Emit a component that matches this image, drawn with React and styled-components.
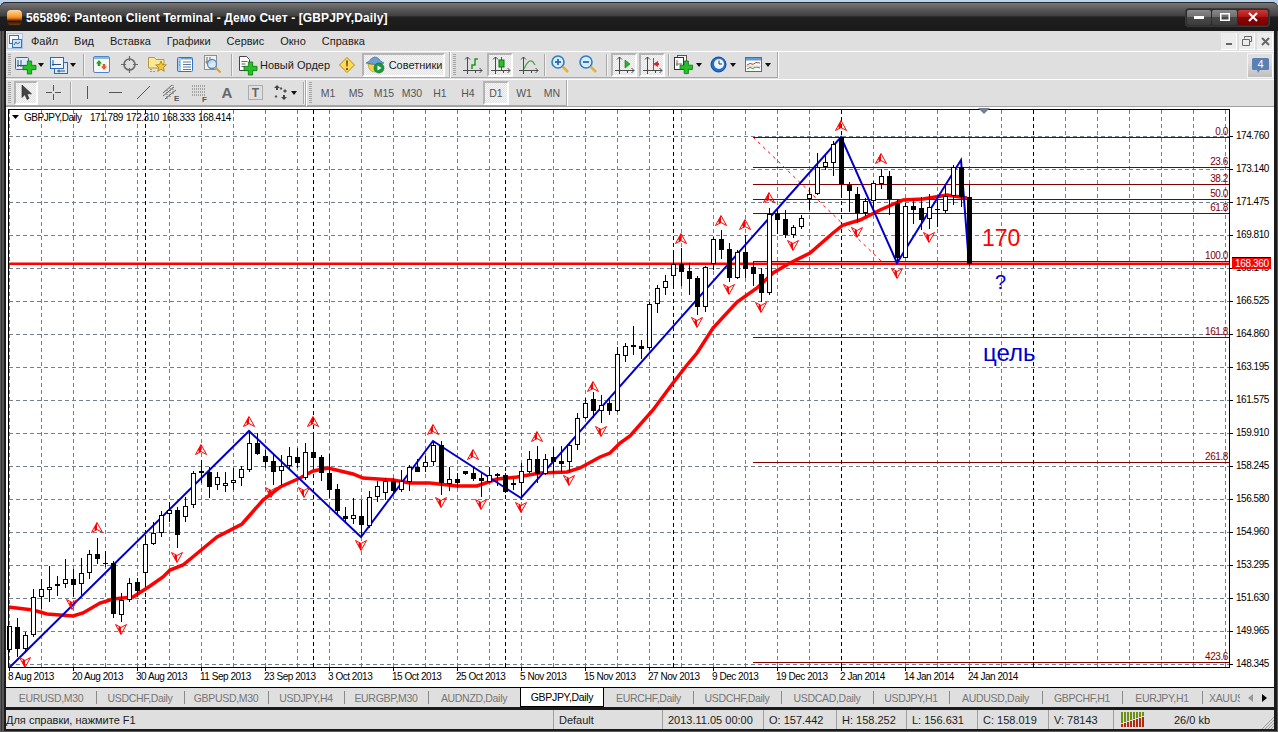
import React from 'react';
import styled, { createGlobalStyle } from 'styled-components';

const Global = createGlobalStyle`
  html, body { margin: 0; padding: 0; background: #b9d1ea; overflow: hidden; }
  body { font: 11px "Liberation Sans", Arial, sans-serif; color: #1c1c1c; }
`;

const Page = styled.div`
  width: 1278px; height: 732px; padding-top: 2px; box-sizing: border-box; overflow: hidden;
`;
const Win = styled.div`
  width: 1278px; height: 730px; box-sizing: border-box; padding: 0 4px 5px 6px;
  display: flex; flex-direction: column; border-radius: 6px 6px 0 0;
  background: #1b1b1b; box-shadow: inset 0 0 0 1px #5a5a5a, inset 2px 0 0 #333, inset 4px 0 0 #555;
`;
const Title = styled.div`
  height: 29px; margin: 0 -4px 0 -6px; padding: 0 9px 0 7px; display: flex; align-items: center; flex: none;
  border-radius: 6px 6px 0 0; border-top: 1px solid #2a2a2a; box-sizing: border-box;
  background: linear-gradient(#777 0, #5a5a5a 6px, #3f3f3f 13px, #1f1f1f 14px, #1a1a1a 100%);
`;
const TitleLogo = styled.div`
  width: 15px; height: 15px; border-radius: 4px; flex: none;
  background: linear-gradient(#ffd9a0 0, #f79a2a 45%, #e8741a 55%, #2a1505 75%, #7a3a10 100%);
`;
const TitleText = styled.div`
  margin-left: 4px; color: #fff; font-weight: 700; font-size: 12px; letter-spacing: 0.11px; white-space: nowrap; padding-top: 1px;
`;
const Caption = styled.div`
  margin-left: auto; display: flex; height: 15px; padding: 1px; border-radius: 3px; gap: 1px; background: #2d2d2d;
  box-shadow: 0 0 0 1px #3b3b3b;
`;
const CapBtn = styled.div`
  width: ${p => p.$w}px; height: 100%; display: flex; align-items: center; justify-content: center; border-radius: 2px;
  background: ${p => p.$red ? 'linear-gradient(#c83a3a 0, #b31414 45%, #8a0505 50%, #780000 100%)' : 'linear-gradient(#8a8a8a 0, #6e6e6e 45%, #484848 50%, #3c3c3c 100%)'};
`;
const Menu = styled.div`
  height: 20px; display: flex; align-items: center; background: #dfdfdf; flex: none; box-sizing: border-box;
`;
const MenuLogo = styled.svg`width: 16px; height: 16px; margin: 0 0 0 1px; flex: none;`;
const MenuItem = styled.div`padding: 0 8px; white-space: nowrap;`;
const MdiGroup = styled.div`margin-left: auto; display: flex; gap: 2px; margin-right: 1px;`;
const MdiBtn = styled.div`
  width: 16px; height: 17px; background: #ececec; display: flex; align-items: center; justify-content: center;
  box-shadow: inset -1px -1px 0 #fff;
`;
const Row = styled.div`
  height: 28px; flex: none; box-sizing: border-box; display: flex; background: #dfdfdf; border-top: 1px solid #fff;
  border-bottom: ${p => p.$line ? '1px solid #a0a0a0' : '0'};
`;
const Toolbar = styled.div`
  display: flex; align-items: center; height: ${p => p.$h || 26}px; box-sizing: border-box;
  border-right: 1px solid #a8a8a8; border-bottom: 1px solid #a8a8a8; box-shadow: 1px 0 0 #fff; padding-right: ${p => p.$pr || 0}px;
  margin-right: 1px; flex: none;
`;
const Gripper = styled.div`
  width: 7px; height: 22px; flex: none; box-sizing: border-box; margin: 0;
  background: repeating-linear-gradient(#a5a5a5 0 1px, transparent 1px 2px) 2px 0 / 3px 100% no-repeat;
`;
const ToolBtn = styled.div`
  width: ${p => p.$on ? p.$w - 2 : p.$w}px; margin: ${p => p.$on ? '0 1px' : '0'}; height: 24px; flex: none; box-sizing: border-box;
  display: flex; align-items: center; justify-content: center; gap: ${p => p.$gap || 0}px;
  font-size: ${p => p.$fs || 11}px; color: ${p => p.$c || '#1c1c1c'}; white-space: nowrap;
  ${p => p.$on ? `
    border: 2px solid; border-color: #b4b4b4 #fff #fff #b4b4b4;
    background: repeating-conic-gradient(#e2e2e2 0 25%, #f6f6f6 0 50%) 0 0 / 2px 2px;
  ` : ''}
`;
const Sep = styled.div`
  width: ${p => p.$w}px; height: 22px; flex: none; display: flex; justify-content: center;
  &::before { content: ""; width: 1px; height: 100%; background: #a8a8a8; box-shadow: 1px 0 0 #f2f2f2; }
`;
const Caret = styled.span`
  width: 0; height: 0; flex: none; border: 3.5px solid transparent; border-top: 4px solid #111; border-bottom: 0;
`;
const Ic = styled.svg`display: block; flex: none; overflow: visible;`;
const Notify = styled.div`
  margin: 1px 1px 0 auto; width: 26px; height: 25px; box-sizing: border-box; border: 1px solid #f4f4f4; border-right-color: #fff;
  background: linear-gradient(#dfdfdf 30%, #bfbfbf); display: flex; align-items: center; justify-content: center;
`;
const ChartWrap = styled.div`height: 580px; flex: none; background: #fff; overflow: hidden;`;
const Plot = styled.svg`display: block; width: 1268px; height: 580px;`;
const AxisText = styled.text`
  font: 10px "Liberation Sans", Arial, sans-serif; letter-spacing: -0.47px; fill: #000;
`;
const FibText = styled.text`
  font: 10px "Liberation Sans", Arial, sans-serif; letter-spacing: -0.4px; fill: #800000; text-anchor: end;
`;
const BigText = styled.text`
  font: ${p => p.$s}px "Liberation Sans", Arial, sans-serif; fill: ${p => p.$c};
`;
const PriceTag = styled.text`
  font: 10px "Liberation Sans", Arial, sans-serif; letter-spacing: -0.35px; fill: #fff;
`;
const Tabs = styled.div`
  height: 20px; flex: none; display: flex; background: #dfdfdf; border-top: 1px solid #000; box-sizing: border-box; overflow: hidden;
`;
const Tab = styled.div`
  width: ${p => p.$w}px; flex: none; box-sizing: border-box; overflow: hidden; white-space: nowrap;
  display: flex; align-items: center; justify-content: ${p => p.$clip ? 'flex-start' : 'center'};
  font-size: 10.5px; letter-spacing: -0.32px; padding-left: ${p => p.$clip ? 7 : 0}px;
  ${p => p.$on
    ? 'background:#fff;color:#000;border:1px solid #000;border-top:0;height:19px;'
    : 'color:#767676;'}
  ${p => p.$line ? 'background-image:linear-gradient(#8a8a8a,#8a8a8a);background-size:1px 13px;background-position:0 3px;background-repeat:no-repeat;' : ''}
`;
const TabScroll = styled.div`flex: 1; display: flex; align-items: center; justify-content: center; gap: 9px;`;
const Status = styled.div`
  margin-top: 3px; height: 19px; flex: none; display: flex; background: #dfdfdf; align-items: stretch;
`;
const Cell = styled.div`
  width: ${p => p.$w}px; flex: none; box-sizing: border-box; display: flex; align-items: center; gap: ${p => p.$gap || 0}px;
  padding-left: ${p => p.$p ?? 5}px; white-space: nowrap; position: relative;
  border-left: ${p => p.$first ? '0' : '1px solid #a0a0a0'};
`;
const Grip = styled.svg`position: absolute; right: 0; bottom: 0;`;

const green = '#22c322';
const PlusMark = ({ x, y, s = 12 }) => {
  const t = s / 3;
  return <path transform={`translate(${x} ${y})`} d={`M${t} 0h${t}v${t}h${t}v${t}h${-t}v${t}h${-t}v${-t}h${-t}v${-t}h${t}z`} fill={green} stroke="#0f6f0f" strokeWidth=".8" />;
};
const NewChart = () => (
  <Ic width="22" height="20" viewBox="0 0 22 20">
    <rect x=".5" y="2.5" width="13" height="12" rx="1" fill="#dcebfa" stroke="#2b6cb0" />
    <path d="M3 5v7M2 10.5h9M6 5v7" stroke="#34507a" fill="none" />
    <PlusMark x="8" y="6" s="13" />
  </Ic>
);
const Profiles = () => (
  <Ic width="18" height="18" viewBox="0 0 18 18">
    <rect x="4.5" y="6.5" width="13" height="11" fill="#dcebfa" stroke="#2b6cb0" />
    <rect x=".5" y="1.5" width="13" height="11" fill="#eef5fc" stroke="#2b6cb0" />
    <path d="M3 4v6M2 8.5h9M9 13.5v3M7 15h8" stroke="#34507a" fill="none" />
  </Ic>
);
const Market = () => (
  <Ic width="17" height="17" viewBox="0 0 17 17">
    <rect x=".5" y=".5" width="16" height="16" rx="1.5" fill="#f7f7f7" stroke="#4a86c5" />
    <path d="M1 1h15v2H1z" fill="#8ab6e2" />
    <path d="M6 4l3 3.4H7.3V10H4.7V7.4H3z" fill="#1aa51a" />
    <path d="M11 14l-3-3.4h1.7V8h2.6v2.6H14z" fill="#e4572a" />
  </Ic>
);
const Cross = () => (
  <Ic width="17" height="17" viewBox="0 0 17 17">
    <circle cx="8.5" cy="8.5" r="5.5" fill="none" stroke="#6a6a6a" strokeWidth="1.6" />
    <path d="M8.5 0v5M8.5 12v5M0 8.5h5M12 8.5h5" stroke="#6a6a6a" strokeWidth="1.2" />
  </Ic>
);
const FolderStar = () => (
  <Ic width="19" height="18" viewBox="0 0 19 18">
    <path d="M.5 3V1.5h6l1.5 2h8V7L14 12H.5z" fill="#f9e79a" stroke="#b79a3a" />
    <path d="M13 5l1.5 3.6 3.9.3-3 2.6.9 3.8-3.3-2-3.3 2 .9-3.8-3-2.6 3.9-.3z" fill="#f2c53a" stroke="#a67f14" strokeWidth=".8" />
    <path d="M3 13v4M6 15v2" stroke="#555" strokeDasharray="1 1" />
  </Ic>
);
const ListWin = () => (
  <Ic width="16" height="15" viewBox="0 0 16 15">
    <rect x=".5" y=".5" width="15" height="14" rx="1" fill="#fff" stroke="#2f74bd" />
    <path d="M1 1h14v1.5H1z" fill="#6aa3db" /><path d="M1 1h3v13H1z" fill="#a8cdf0" />
    <path d="M6 5h8M6 7.5h8M6 10h8M6 12.5h8" stroke="#5b7a9a" />
    <path d="M2 5h1M2 8h1" stroke="#d33" />
  </Ic>
);
const ZoomChart = () => (
  <Ic width="18" height="19" viewBox="0 0 18 19">
    <rect x=".5" y=".5" width="12" height="14" fill="#f2f2f2" stroke="#8f8f8f" />
    <path d="M3 2v7M1.5 7h8M6 2v7" stroke="#666" fill="none" />
    <circle cx="8" cy="9" r="4.5" fill="#cfe6fb" fillOpacity=".8" stroke="#5a89b5" strokeWidth="1.3" />
    <path d="M11.5 12.5L16.5 17.5" stroke="#d7a72e" strokeWidth="2.2" />
  </Ic>
);
const Order = () => (
  <Ic width="19" height="20" viewBox="0 0 19 20">
    <path d="M1.5 1.5h7l3 3v11h-10z" fill="#fff" stroke="#444" />
    <path d="M3.5 6.5h6M3.5 9h4M3.5 11.5h3" stroke="#666" />
    <PlusMark x="6" y="7" s="13" />
  </Ic>
);
const Warn = () => (
  <Ic width="16" height="16" viewBox="0 0 16 16">
    <path d="M8 .5L15.5 8 8 15.5.5 8z" fill="#ffd95a" stroke="#b58a10" />
    <path d="M7 3.5h2l-.3 6H7.3zM7 11h2v2H7z" fill="#7a5a08" />
  </Ic>
);
const Experts = () => (
  <Ic width="20" height="19" viewBox="0 0 20 19">
    <path d="M3 9q1 8 7 8t7-8z" fill="#f6d23e" stroke="#a88a1a" strokeWidth=".6" />
    <path d="M1 8q4-1.5 5-4 4-4 8 0 1 2.500 5 4-9 3-18 0z" fill="#6e9fd0" stroke="#3a6ea4" strokeWidth=".7" />
    <circle cx="14" cy="13" r="5" fill="#1a9a3c" stroke="#0b6a22" strokeWidth=".6" />
    <path d="M12.500 10.500l4 2.500-4 2.500z" fill="#fff" />
  </Ic>
);
const Axes = ({ children }) => (
  <Ic width="19" height="20" viewBox="0 0 19 20">
    <g fill="none" stroke="#4a4a4a"><path d="M4.500 2v17M2 4.500L4.500 2 7 4.500M0 15.500h19M16.500 13l2.500 2.500-2.500 2.500M12.500 15v3" /></g>
    {children}
  </Ic>
);
const Mag = ({ plus }) => (
  <Ic width="19" height="19" viewBox="0 0 19 19">
    <circle cx="7" cy="7" r="6" fill="#d7ecfb" stroke="#2f7fc5" strokeWidth="1.6" />
    <path d="M4 7h6" stroke="#2f6aa8" strokeWidth="1.8" />
    {plus && <path d="M7 4v6" stroke="#2f6aa8" strokeWidth="1.8" />}
    <path d="M11.500 11.500L17 17" stroke="#e2b23c" strokeWidth="2.6" />
  </Ic>
);
const CopyPlus = () => (
  <Ic width="19" height="19" viewBox="0 0 19 19">
    <rect x="3.500" y=".5" width="9" height="12" fill="#f4f4f4" stroke="#555" />
    <rect x=".5" y="2.500" width="9" height="12" fill="#fff" stroke="#333" />
    <path d="M3 5v6M2 9h6" stroke="#666" />
    <PlusMark x="6" y="6" s="12.600" />
  </Ic>
);
const Clock = () => (
  <Ic width="17" height="17" viewBox="0 0 17 17">
    <circle cx="8.500" cy="8.500" r="7.500" fill="#1e6fd0" stroke="#0c4a96" />
    <circle cx="9" cy="8" r="5" fill="#eef3f8" />
    <path d="M9 4.500V8h3" stroke="#333" fill="none" />
  </Ic>
);
const Template = () => (
  <Ic width="17" height="15" viewBox="0 0 17 15">
    <rect x=".5" y=".5" width="16" height="14" fill="#fff" stroke="#2f74bd" />
    <path d="M1 1h15v2.500H1z" fill="#5f9bd8" />
    <path d="M2 8l3-1.500 3 .8 3-1.800 4 .5" stroke="#b3421f" fill="none" />
    <path d="M2 12l3-1.500 3 1 3-1.500 4 1" stroke="#2f9a2f" fill="none" />
    <path d="M1 9.200h15" stroke="#ccc" />
  </Ic>
);
const Arrow = () => (
  <Ic width="15" height="18" viewBox="0 0 15 18"><path d="M3 1v12.500l3-3 2 5 2-1-2-4.700h4.500z" fill="#444" stroke="#222" strokeWidth=".6" /></Ic>
);
const Thin = ({ d }) => (
  <Ic width="17" height="17" viewBox="0 0 17 17"><path d={d} stroke="#555" strokeWidth="1" fill="none" /></Ic>
);
const Channel = () => (
  <Ic width="19" height="18" viewBox="0 0 19 18">
    <path d="M1 12L12 3M3 15L14 6M1 9L10 1" stroke="#666" fill="none" />
    <path d="M5 15V5M8 13V3M11 10V1" stroke="#666" strokeDasharray="1 1" fill="none" />
    <text x="12" y="17" fontFamily="Liberation Sans" fontSize="8" fontWeight="700" fill="#555">E</text>
  </Ic>
);
const Fibo = () => (
  <Ic width="17" height="18" viewBox="0 0 17 18">
    <path d="M1 2h13M1 5h13M1 8h13M1 11h13" stroke="#666" strokeDasharray="1 1" fill="none" />
    <text x="11" y="18" fontFamily="Liberation Sans" fontSize="8" fontWeight="700" fill="#555">F</text>
  </Ic>
);
const LabelT = () => (
  <Ic width="15" height="15" viewBox="0 0 15 15">
    <rect x=".5" y=".5" width="14" height="14" fill="none" stroke="#777" strokeDasharray="1 1" />
    <text x="7.500" y="12" textAnchor="middle" fontFamily="Liberation Sans" fontSize="12" fontWeight="700" fill="#666">T</text>
  </Ic>
);
const Shapes = () => (
  <Ic width="15" height="15" viewBox="0 0 15 15">
    <path d="M4 0l3 3H5v2H3V3H1zM11 15l-3-3h2v-2h2v2h2z" fill="#444" />
    <path d="M8 2l1.500 1.500L8 5 6.500 3.500zM3 10l1.500 1.500L3 13l-1.500-1.500zM12 4l2 2-2 2-2-2z" fill="#555" />
  </Ic>
);

const candles = [
[626,626,650,652,0],[618,627,649,657,1],[632,635,649,653,0],[589,597,635,637,0],[579,589,597,609,0],[566,587,590,602,0],[576,584,586,596,0],[559,579,584,588,0],[569,579,585,597,1],[558,573,584,595,0],
[550,554,573,579,0],[538,554,559,564,1],[551,563,564,567,1],[561,563,614,618,1],[593,600,615,622,0],[578,583,600,602,0],[578,582,591,597,1],[535,544,573,586,0],[522,533,544,545,0],[511,515,533,537,0],
[502,510,514,522,0],[507,510,535,548,1],[497,506,517,522,0],[471,473,505,508,0],[460,471,473,483,0],[467,472,487,498,1],[472,477,485,490,0],[472,483,486,492,0],[468,480,483,490,0],[466,469,478,486,0],
[432,443,470,472,0],[433,443,454,455,1],[450,456,462,468,1],[455,461,472,485,1],[455,466,471,485,0],[447,456,466,470,0],[448,457,463,468,1],[443,452,478,480,0],[432,452,458,468,1],[455,457,473,481,1],
[454,473,490,498,1],[484,489,511,515,1],[507,516,519,522,1],[498,515,519,524,0],[500,516,525,537,1],[491,497,526,528,0],[481,486,497,502,0],[478,481,493,500,0],[478,481,491,494,1],[470,481,490,492,0],
[465,467,482,491,0],[459,467,472,472,1],[456,462,467,472,0],[442,445,462,466,0],[441,445,483,495,1],[467,479,484,491,0],[473,479,483,488,1],[471,471,474,475,1],[467,473,479,481,1],[473,478,481,497,1],
[467,475,482,483,0],[473,474,476,486,1],[473,475,492,493,1],[479,483,485,490,0],[463,471,483,500,0],[451,459,472,473,0],[446,459,474,483,1],[454,459,474,475,0],[447,457,462,473,1],[446,461,464,472,1],
[443,445,462,473,0],[413,418,445,450,0],[398,403,418,419,0],[392,399,411,418,1],[395,405,411,423,0],[398,403,411,415,1],[347,354,411,412,0],[343,346,356,362,0],[326,345,347,355,1],[340,346,349,359,1],
[302,304,348,350,0],[285,288,304,313,0],[275,281,288,295,0],[253,264,276,285,0],[248,264,272,286,1],[263,271,279,295,1],[276,278,307,315,1],[266,267,307,312,0],[237,239,264,270,0],[230,239,250,259,1],
[243,249,278,282,1],[250,252,278,279,0],[235,252,269,278,1],[262,267,274,286,1],[268,274,293,302,1],[208,214,293,295,0],[210,214,220,234,1],[210,219,235,238,1],[225,227,235,238,0],[215,218,227,229,0],
[188,194,199,210,0],[153,167,194,195,0],[155,162,167,170,0],[141,144,163,176,0],[137,137,184,196,1],[182,185,191,212,1],[187,194,213,223,1],[198,201,213,216,0],[181,183,201,212,0],[169,176,184,189,0],
[171,176,199,215,1],[200,203,258,263,1],[203,206,258,258,0],[199,206,210,224,1],[197,208,220,230,1],[194,207,219,229,0],[196,209,210,227,1],[184,196,211,213,0],[165,167,196,205,0],[160,167,197,207,1],[185,197,264,266,1],
];
const ma = [[8,607],[33,610],[47,614],[73,616],[83,613],[100,603],[113,599],[133,597],[150,586],[163,577],[170,570],[183,565],[200,551],[217,537],[242,524],[263,500],[280,487],[300,478],[313,471],[328,468],[353,474],[363,478],[393,480],[410,483],[430,483],[457,486],[477,486],[497,479],[517,477],[540,473],[567,472],[580,468],[600,457],[610,453],[620,443],[630,436],[653,410],[673,383],[687,365],[697,353],[713,328],[737,302],[757,288],[773,273],[790,263],[810,253],[833,233],[843,225],[860,220],[880,210],[903,200],[923,199],[947,195],[967,198]];
const zig = [[10,667],[249,431],[361,537],[433,441],[521,498],[841,137],[897,263],[961,160],[969,264]];
const ups = [[97,528],[201,450],[249,422],[313,422],[433,430],[473,455],[537,437],[593,387],[681,239],[721,221],[745,225],[769,198],[841,126],[881,159]];
const downs = [[25,662],[72,604],[121,629],[177,557],[271,492],[304,492],[361,545],[441,502],[481,504],[521,507],[569,480],[601,431],[697,322],[729,289],[761,307],[793,245],[857,232],[897,273],[929,237]];
const prices = ['148.345','149.965','151.630','153.295','154.960','156.580','158.245','159.910','161.575','163.195','164.860','166.525','168.145','169.810','171.475','173.140','174.760'];
const dates = ['8 Aug 2013','20 Aug 2013','30 Aug 2013','11 Sep 2013','23 Sep 2013','3 Oct 2013','15 Oct 2013','25 Oct 2013','5 Nov 2013','15 Nov 2013','27 Nov 2013','9 Dec 2013','19 Dec 2013','2 Jan 2014','14 Jan 2014','24 Jan 2014'];
const fibs = [['0.0',137],['23.6',167],['38.2',184],['50.0',199],['61.8',213],['100.0',261],['161.8',337],['261.8',462],['423.6',662]];
const seps = [145, 313, 505, 673, 841, 1033];
const pts = a => a.map(p => p.join(',')).join(' ');
const Fractal = ({ x, y, flip }) => (
  <g transform={`translate(${x} ${y}) scale(1 ${flip ? -1 : 1})`}>
    <path d="M0-5.500L5.500 4.500 0 1.500-5.500 4.500z" fill="none" stroke="#f00" strokeWidth="1" />
    <path d="M0-5.500L-3 0-1.500 3 0 1.500z" fill="#f00" />
  </g>
);

const Chart = () => (
  <Plot viewBox="6 107 1268 580">
    <g stroke="#708090" strokeDasharray="4 3" shapeRendering="crispEdges">
      {prices.map((p, i) => <line key={p} x1="9" x2="1229" y1={664.5 - 33 * i} y2={664.5 - 33 * i} />)}
      {Array.from({ length: 39 }, (_, i) => 9 + 32 * i).map(x => <line key={x} x1={x + .5} x2={x + .5} y1="110" y2="667" />)}
    </g>
    <g stroke="#000" strokeDasharray="4 3" shapeRendering="crispEdges">
      {seps.map(x => <line key={x} x1={x + .5} x2={x + .5} y1="110" y2="667" />)}
    </g>
    <g stroke="#800000" shapeRendering="crispEdges">
      {fibs.map(([t, y]) => <line key={t} x1="753" x2="1229" y1={y + .5} y2={y + .5} />)}
    </g>
    <line x1="753" y1="137" x2="882" y2="262" stroke="#f00" strokeDasharray="3 4" />
    <rect x="9" y="262.500" width="1220" height="2.500" fill="#f00" />
    <polyline points={pts(ma)} fill="none" stroke="#f00" strokeWidth="3.500" />
    <polyline points={pts(zig)} fill="none" stroke="#0000cc" strokeWidth="2" />
    <g shapeRendering="crispEdges">
      {candles.map(([h, t, b, l, black], i) => {
        const x = 9 + 8 * i;
        return (
          <g key={i}>
            <line x1={x + .5} x2={x + .5} y1={h} y2={l} stroke="#000" />
            {black
              ? <rect x={x - 2} y={t} width="5" height={Math.max(b - t, 1)} fill="#000" />
              : <rect x={x - 1.5} y={t + .5} width="4" height={Math.max(b - t - 1, 1)} fill="#fff" stroke="#000" />}
          </g>
        );
      })}
    </g>
    {ups.map(([x, y]) => <Fractal key={x} x={x} y={y} />)}
    {downs.map(([x, y]) => <Fractal key={x} x={x} y={y} flip />)}
    {fibs.map(([t, y]) => <FibText key={t} x="1228" y={y - 2}>{t}</FibText>)}
    <path d="M8.500 109.500H1229.500V667.500H8.500z" fill="none" stroke="#000" shapeRendering="crispEdges" />
    <g stroke="#000" shapeRendering="crispEdges">
      {prices.map((p, i) => <line key={p} x1="1229" x2="1233" y1={664.5 - 33 * i} y2={664.5 - 33 * i} />)}
      {dates.map((d, i) => <line key={d} x1={9.5 + 64 * i} x2={9.5 + 64 * i} y1="667" y2="671" />)}
    </g>
    {prices.map((p, i) => <AxisText key={p} x="1236" y={666.5 - 33 * i}>{p}</AxisText>)}
    {dates.map((d, i) => <AxisText key={d} x={8 + 64 * i} y="680">{d}</AxisText>)}
    <path d="M12 115h7l-3.500 4z" fill="#000" />
    <AxisText x="24" y="121">GBPJPY,Daily</AxisText>
    <AxisText x="90" y="121">171.789</AxisText>
    <AxisText x="126" y="121">172.310</AxisText>
    <AxisText x="162" y="121">168.333</AxisText>
    <AxisText x="198" y="121">168.414</AxisText>
    <path d="M978 108h12l-6 6z" fill="#708090" />
    <BigText x="982" y="246" $s="23" $c="#f00">170</BigText>
    <BigText x="995" y="289" $s="20" $c="#0000cc">?</BigText>
    <BigText x="983" y="361" $s="24" $c="#0000cc">цель</BigText>
    <rect x="1232" y="258" width="39" height="11" fill="#f00" />
    <line x1="1232" x2="1271" y1="257.500" y2="257.500" stroke="#000" />
    <PriceTag x="1235" y="267">168.360</PriceTag>
  </Plot>
);

const tabs = [['EURUSD,M30',90],['USDCHF,Daily',88],['GBPUSD,M30',84],['USDJPY,H4',76],['EURGBP,M30',84],['AUDNZD,Daily',92],['GBPJPY,Daily',84,true],['EURCHF,Daily',89],['USDCHF,Daily',88],['USDCAD,Daily',92],['USDJPY,H1',76],['AUDUSD,Daily',93],['GBPCHF,H1',80],['EURJPY,H1',80]];
const periods = ['M1','M5','M15','M30','H1','H4','D1','W1','MN'];

export default function App() {
  return (
    <Page>
      <Global />
      <Win>
        <Title>
          <TitleLogo />
          <TitleText>565896: Panteon Client Terminal - Демо Счет - [GBPJPY,Daily]</TitleText>
          <Caption>
            <CapBtn $w={24}><Ic width="10" height="3" viewBox="0 0 10 3"><path d="M0 0h10v3H0z" fill="#fff" /></Ic></CapBtn>
            <CapBtn $w={25}><Ic width="10" height="8" viewBox="0 0 10 8"><path d="M.75.75h8.500v6.500H.75z" fill="none" stroke="#fff" strokeWidth="1.500" /></Ic></CapBtn>
            <CapBtn $w={30} $red><Ic width="10" height="8" viewBox="0 0 10 8"><path d="M1 0l8 8M9 0L1 8" stroke="#fff" strokeWidth="2" /></Ic></CapBtn>
          </Caption>
        </Title>
        <Menu>
          <MenuLogo viewBox="0 0 16 16">
            <rect x=".5" y=".5" width="15" height="15" fill="#e8f1fa" stroke="#a9c4e0" />
            <rect x="2.500" y="2.500" width="9" height="8" fill="#fff" stroke="#3a74b5" />
            <rect x="5.500" y="6.500" width="9" height="8" fill="#cfe3f7" stroke="#3a74b5" />
            <path d="M7 12l2-3 1.500 2L13 9" stroke="#2f6aa8" fill="none" />
          </MenuLogo>
          {['Файл', 'Вид', 'Вставка', 'Графики', 'Сервис', 'Окно', 'Справка'].map(m => <MenuItem key={m}>{m}</MenuItem>)}
          <MdiGroup>
            <MdiBtn><Ic width="8" height="8" viewBox="0 0 8 8"><path d="M1 6h6v2H1z" fill="#666" /></Ic></MdiBtn>
            <MdiBtn><Ic width="10" height="10" viewBox="0 0 10 10"><path d="M2.500 2.500V.5h7v5H7.500M.5 3.500h7v6h-7z" fill="none" stroke="#666" /><path d="M1 3h6v1H1z" fill="#666" /></Ic></MdiBtn>
            <MdiBtn><Ic width="9" height="9" viewBox="0 0 9 9"><path d="M1 1l7 7M8 1L1 8" stroke="#666" strokeWidth="2" /></Ic></MdiBtn>
          </MdiGroup>
        </Menu>
        <Row>
          <Toolbar $pr={3}>
            <Gripper />
            <ToolBtn $w={33} $gap={1}><NewChart /><Caret /></ToolBtn>
            <ToolBtn $w={33} $gap={2}><Profiles /><Caret /></ToolBtn>
            <Sep $w={8} />
            <ToolBtn $w={28}><Market /></ToolBtn>
            <ToolBtn $w={28}><Cross /></ToolBtn>
            <ToolBtn $w={28}><FolderStar /></ToolBtn>
            <ToolBtn $w={28}><ListWin /></ToolBtn>
            <ToolBtn $w={28}><ZoomChart /></ToolBtn>
            <Sep $w={8} />
            <ToolBtn $w={98} $gap={3}><Order />Новый Ордер</ToolBtn>
            <ToolBtn $w={28}><Warn /></ToolBtn>
            <ToolBtn $w={85} $on $gap={4}><Experts />Советники</ToolBtn>
          </Toolbar>
          <Toolbar $pr={1}>
            <Gripper />
            <ToolBtn $w={28}><Axes><path d="M9 14v-4h3V4h3" fill="none" stroke="#1f9a1f" strokeWidth="1.500" /></Axes></ToolBtn>
            <ToolBtn $w={28} $on><Axes><path d="M10.500 2v13" stroke="#1a7a1a" /><rect x="8" y="5" width="5" height="7" fill="#25c425" stroke="#0f6f0f" /></Axes></ToolBtn>
            <ToolBtn $w={28}><Axes><path d="M5 14c3-7 6-10 9-7l2 3" fill="none" stroke="#4fa04f" strokeWidth="1.300" /></Axes></ToolBtn>
            <Sep $w={4} />
            <ToolBtn $w={28}><Mag plus /></ToolBtn>
            <ToolBtn $w={28}><Mag /></ToolBtn>
            <Sep $w={8} />
            <ToolBtn $w={28} $on><Axes><path d="M10 5l5 4-5 4z" fill="#26b526" stroke="#0f6f0f" strokeWidth=".6" /></Axes></ToolBtn>
            <ToolBtn $w={28} $on><Axes><path d="M10.500 3v12" stroke="#2a6cb5" /><path d="M10 9l5-3v2h1v2h-1v2z" fill="#d22" /></Axes></ToolBtn>
            <Sep $w={4} />
            <ToolBtn $w={36} $gap={3}><CopyPlus /><Caret /></ToolBtn>
            <ToolBtn $w={34} $gap={3}><Clock /><Caret /></ToolBtn>
            <ToolBtn $w={36} $gap={3}><Template /><Caret /></ToolBtn>
          </Toolbar>
          <Notify>
            <Ic width="17" height="15" viewBox="0 0 17 15">
              <path d="M0 1.500Q0 0 1.500 0h14Q17 0 17 1.500v9q0 1.500-1.500 1.500H8l-2 3-1-3H1.500Q0 12 0 10.500z" fill="#5a7fb5" />
              <text x="8.500" y="10" textAnchor="middle" fontFamily="Liberation Sans" fontSize="11" fill="#fff">4</text>
            </Ic>
          </Notify>
        </Row>
        <Row $line>
          <Toolbar $h={26}>
            <Gripper />
            <ToolBtn $w={26} $on><Arrow /></ToolBtn>
            <ToolBtn $w={28}><Thin d="M8.500 1v6M8.500 10v6M1 8.500h6M10 8.500h6" /></ToolBtn>
            <Sep $w={6} />
            <ToolBtn $w={28}><Thin d="M8.500 2v13" /></ToolBtn>
            <ToolBtn $w={28}><Thin d="M2 8.500h13" /></ToolBtn>
            <ToolBtn $w={28}><Thin d="M2 15L15 2" /></ToolBtn>
            <ToolBtn $w={28}><Channel /></ToolBtn>
            <ToolBtn $w={28}><Fibo /></ToolBtn>
            <ToolBtn $w={28} $fs={15} $c="#666"><strong>A</strong></ToolBtn>
            <ToolBtn $w={28}><LabelT /></ToolBtn>
            <ToolBtn $w={32} $gap={3}><Shapes /><Caret /></ToolBtn>
            <Sep $w={4} />
          </Toolbar>
          <Toolbar $h={26}>
            <Gripper />
            {periods.map(p => <ToolBtn key={p} $w={28} $on={p === 'D1'} $c="#555" $fs={10.500}>{p}</ToolBtn>)}
          </Toolbar>
        </Row>
        <ChartWrap><Chart /></ChartWrap>
        <Tabs>
          {tabs.map(([t, w, on], i) => <Tab key={t + i} $w={w} $on={on} $line={i > 0 && !on && tabs[i - 1][2] !== true}>{t}</Tab>)}
          <Tab $w={38} $clip $line>XAUUS</Tab>
          <TabScroll>
            <Ic width="5" height="8" viewBox="0 0 5 8"><path d="M5 0v8L0 4z" fill="#999" /></Ic>
            <Ic width="5" height="8" viewBox="0 0 5 8"><path d="M0 0v8l5-4z" fill="#000" /></Ic>
          </TabScroll>
        </Tabs>
        <Status>
          <Cell $w={547} $first $p={0}>Для справки, нажмите F1</Cell>
          <Cell $w={109}>Default</Cell>
          <Cell $w={101}>2013.11.05 00:00</Cell>
          <Cell $w={73}>O: 157.442</Cell>
          <Cell $w={70}>H: 158.252</Cell>
          <Cell $w={71}>L: 156.631</Cell>
          <Cell $w={71}>C: 158.019</Cell>
          <Cell $w={65}>V: 78143</Cell>
          <Cell $w={161} $p={7} $gap={31}>
            <Ic width="22" height="15" viewBox="0 0 22 15">
              {Array.from({ length: 8 }, (_, i) => {
                const h = 3 + i;
                return (
                  <g key={i}>
                    <rect x={i * 3} y={0} width="2" height={14 - h} fill="#6f8f10" />
                    <rect x={i * 3} y={15 - h} width="2" height={h} fill="#b22a12" />
                  </g>
                );
              })}
            </Ic>
            26/0 kb
            <Grip width="13" height="13" viewBox="0 0 13 13"><path d="M13 1L1 13M13 4L4 13M13 7l-6 6M13 10l-3 3" stroke="#9a9a9a" /></Grip>
          </Cell>
        </Status>
      </Win>
    </Page>
  );
}
